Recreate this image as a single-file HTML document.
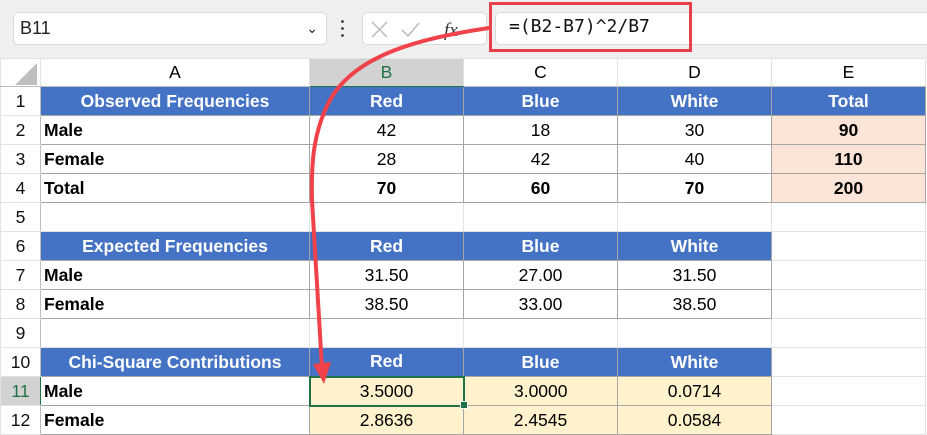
<!DOCTYPE html>
<html><head><meta charset="utf-8"><style>
body{margin:0;width:927px;height:435px;overflow:hidden;background:#fff;font-family:"Liberation Sans",sans-serif;position:relative}
.top{position:absolute;left:0;top:0;width:927px;height:58px;background:#f0f0f0}
.nb{position:absolute;left:13px;top:12px;width:314px;height:33px;background:#fff;border:1px solid #d9d9d9;border-radius:5px;box-sizing:border-box;font-size:18px;line-height:31px;padding-left:6px;color:#222}
.fb{position:absolute;left:362px;top:12px;width:125px;height:33px;background:#fff;border:1px solid #d9d9d9;border-radius:5px;box-sizing:border-box}
.fi{position:absolute;left:495px;top:12px;width:440px;height:33px;background:#fff;border:1px solid #d9d9d9;border-radius:5px;box-sizing:border-box}
.red{position:absolute;left:489px;top:2px;width:203px;height:50px;border:3px solid #e8404a;box-sizing:border-box}
.ft{position:absolute;left:509px;top:16px;font-family:"DejaVu Sans Mono",monospace;font-size:18px;color:#111}
table{position:absolute;left:0;top:58px;border-collapse:collapse;table-layout:fixed}
td{height:29px;padding:0;border:1px solid #e2e2e2;font-size:17.5px;text-align:center;white-space:nowrap;overflow:hidden;color:#000;box-sizing:border-box}
tr.ch td{background:#fff;border-bottom:1px solid #bdbdbd;height:28px}
td.rh{text-align:center;border-right:1px solid #bdbdbd;color:#111}
td.h{background:#4472c4;color:#fff;font-weight:bold;border:1px solid #a6a6a6}
td.d{border:1px solid #a6a6a6}
td.l{text-align:left;font-weight:bold;padding-left:3px}
td.b{font-weight:bold}
td.p{background:#fce4d6}
td.y{background:#fff2cc}
</style></head><body>
<div class="top"></div>
<div class="nb">B11<span style="position:absolute;right:8px;top:0;font-size:14px">&#8964;</span></div>
<div style="position:absolute;left:341px;top:18px;width:3px;height:22px;background:radial-gradient(circle,#444 1.3px,transparent 1.5px) 0 0/3px 7px"></div>
<div class="fb"><svg width="125" height="33" style="position:absolute;left:0;top:0"><path d="M9 9L24 24M24 9L9 24" stroke="#bbb" stroke-width="1.5"/><path d="M39 17L45 23L56 10" stroke="#bbb" stroke-width="1.5" fill="none"/><text x="81" y="23" font-family="Liberation Serif" font-style="italic" font-size="19" fill="#333">fx</text></svg></div>
<div class="fi"></div>
<div class="ft">=(B2-B7)^2/B7</div>
<div class="red"></div>
<table>
<colgroup><col style="width:40px"><col style="width:269px"><col style="width:154px"><col style="width:154px"><col style="width:154px"><col style="width:154px"></colgroup>
<tr class="ch"><td style="position:relative"><svg width="34" height="24" style="position:absolute;left:14px;top:2px"><path d="M22 2L22 24L0 24Z" fill="#bfbfbf"/></svg></td><td>A</td><td style="background:#d2d2d2;color:#217346;border-bottom:1px solid #217346">B</td><td>C</td><td>D</td><td>E</td></tr>
<tr><td class="rh">1</td><td class="h">Observed Frequencies</td><td class="h">Red</td><td class="h">Blue</td><td class="h">White</td><td class="h">Total</td></tr>
<tr><td class="rh">2</td><td class="d l">Male</td><td class="d">42</td><td class="d">18</td><td class="d">30</td><td class="d p b">90</td></tr>
<tr><td class="rh">3</td><td class="d l">Female</td><td class="d">28</td><td class="d">42</td><td class="d">40</td><td class="d p b">110</td></tr>
<tr><td class="rh">4</td><td class="d l">Total</td><td class="d b">70</td><td class="d b">60</td><td class="d b">70</td><td class="d p b">200</td></tr>
<tr><td class="rh">5</td><td></td><td></td><td></td><td></td><td></td></tr>
<tr><td class="rh">6</td><td class="h">Expected Frequencies</td><td class="h">Red</td><td class="h">Blue</td><td class="h">White</td><td></td></tr>
<tr><td class="rh">7</td><td class="d l">Male</td><td class="d">31.50</td><td class="d">27.00</td><td class="d">31.50</td><td></td></tr>
<tr><td class="rh">8</td><td class="d l">Female</td><td class="d">38.50</td><td class="d">33.00</td><td class="d">38.50</td><td></td></tr>
<tr><td class="rh">9</td><td></td><td></td><td></td><td></td><td></td></tr>
<tr><td class="rh">10</td><td class="h">Chi-Square Contributions</td><td class="h">Red</td><td class="h">Blue</td><td class="h">White</td><td></td></tr>
<tr><td class="rh" style="background:#d2d2d2;color:#217346;border-right:1px solid #217346">11</td><td class="d l">Male</td><td class="d y" style="border:2px solid #217346">3.5000</td><td class="d y">3.0000</td><td class="d y">0.0714</td><td></td></tr>
<tr><td class="rh">12</td><td class="d l">Female</td><td class="d y">2.8636</td><td class="d y">2.4545</td><td class="d y">0.0584</td><td></td></tr>
</table>
<div style="position:absolute;left:460px;top:401px;width:6px;height:6px;background:#217346;border:1px solid #fff"></div>
<svg width="927" height="435" style="position:absolute;left:0;top:0;pointer-events:none">
<path d="M489 28C420 38 355 55 330 100C314 130 311 160 312 200L322 368" stroke="#f0424a" stroke-width="4" fill="none" stroke-linecap="round"/>
<path d="M313 364L331 362L324 384Z" fill="#f0424a"/>
</svg>
</body></html>
